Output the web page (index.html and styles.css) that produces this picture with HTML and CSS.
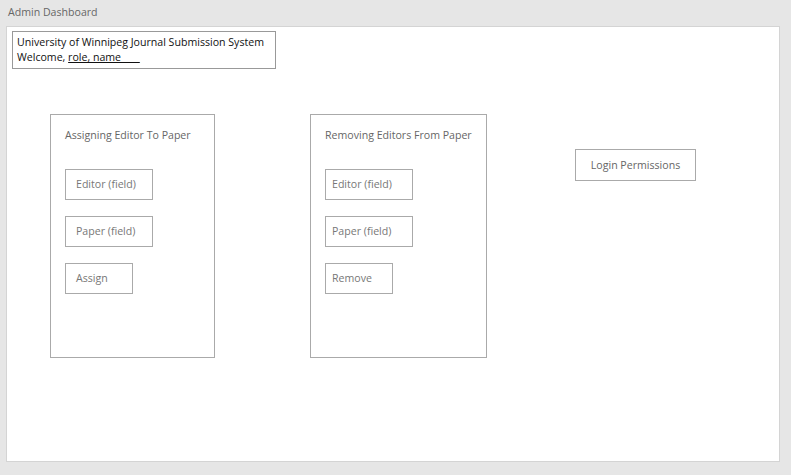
FILE: index.html
```html
<!DOCTYPE html>
<html lang="en">
<head>
    <meta charset="UTF-8">
    <meta name="viewport" content="width=device-width, initial-scale=1.0">
    <title>Admin Dashboard</title>
    <link rel="stylesheet" href="styles.css">
</head>
<body>

    <div class="window-title">Admin Dashboard</div>
    <div class="canvas">
        <div class="header">
            <div>University of Winnipeg Journal Submission System</div>
            <div>Welcome, <span class="blank">role, name____</span></div>
        </div>

        <div class="panels">
            <div class="panel panel-assign">
                <div class="panel-title">Assigning Editor To Paper</div>
                <div class="field">Editor (field)</div>
                <div class="field">Paper (field)</div>
                <div class="button">Assign</div>
            </div>

            <div class="panel panel-remove">
                <div class="panel-title">Removing Editors From Paper</div>
                <div class="field">Editor (field)</div>
                <div class="field">Paper (field)</div>
                <div class="button">Remove</div>
            </div>

            <div class="login">Login Permissions</div>
        </div>
    </div>

</body>
</html>
```

FILE: styles.css
```css
body {
    font-family: 'Open Sans', 'Noto Sans', sans-serif;
    font-size: 10.6px;
    margin: 0;
    padding: 0;
    background-color: #e6e6e6;
    height: 475px;
    white-space: nowrap;
}
.window-title {
    height: 26px;
    line-height: 24px;
    padding-left: 8px;
    color: #666;
}
.canvas {
    margin-left: 6px;
    width: 774px;
    height: 436px;
    background-color: #fff;
    border: 1px solid #d4d4d4;
    padding: 4px 5px;
    box-sizing: border-box;
}
.header {
    display: inline-block;
    border: 1px solid #999;
    padding: 3px 6px 3px 4px;
    width: 264px;
    box-sizing: border-box;
    line-height: 15px;
    color: #111;
}
.blank {
    text-decoration: underline;
}
.panels {
    display: flex;
    align-items: flex-start;
    margin-top: 45px;
    margin-left: 38px;
}
.panel {
    border: 1px solid #aaa;
    height: 244px;
    box-sizing: border-box;
    padding: 13px 14px;
}
.panel-assign {
    width: 165px;
}
.panel-remove {
    width: 177px;
    margin-left: 95px;
}
.panel-title {
    color: #666;
    margin-bottom: 27px;
}
.field,
.button {
    border: 1px solid #aaa;
    color: #777;
    height: 31px;
    line-height: 29px;
    box-sizing: border-box;
    padding-left: 10px;
}
.field {
    width: 88px;
    margin-bottom: 16px;
}
.button {
    width: 68px;
}
.panel-remove .field,
.panel-remove .button {
    padding-left: 6px;
}
.login {
    margin-top: 35px;
    margin-left: 88px;
    width: 121px;
    height: 32px;
    line-height: 30px;
    box-sizing: border-box;
    border: 1px solid #aaa;
    color: #666;
    text-align: center;
}
```
